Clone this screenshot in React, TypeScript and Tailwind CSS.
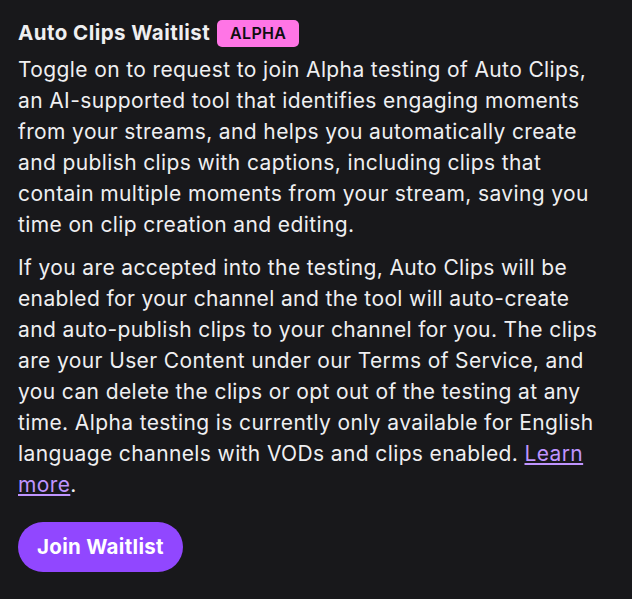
export default function App() {
  return (
    <div
      className="min-h-[599px] w-[632px] bg-[#18181b] px-[18px] pt-[18px] text-[#efeff1]"
      style={{ fontFamily: "Inter, 'Noto Sans', sans-serif" }}
    >
      <div className="flex items-center gap-[7px]">
        <h2 className="text-[20.5px] font-bold leading-[30px] tracking-[0.45px]">Auto Clips Waitlist</h2>
        <span className="rounded-[5px] bg-[#ff75e6] px-[13px] py-[2px] text-[16px] font-semibold leading-[23px] tracking-[0.3px] text-[#0e0e10]">
          ALPHA
        </span>
      </div>
      <div className="w-[586px] text-[21px] leading-[31px] tracking-[0.38px]">
        <p className="mt-[6px]">
          Toggle on to request to join Alpha testing of Auto Clips, an AI-supported tool that
          identifies engaging moments from your streams, and helps you automatically create and
          publish clips with captions, including clips that contain multiple moments from your
          stream, saving you time on clip creation and editing.
        </p>
        <p className="mt-[12px]">
          If you are accepted into the testing, Auto Clips will be enabled for your channel and the
          tool will auto-create and auto-publish clips to your channel for you. The clips are your
          User Content under our Terms of Service, and you can delete the clips or opt out of the
          testing at any time. Alpha testing is currently only available for English language
          channels with VODs and clips enabled.{" "}
          <a href="#" className="text-[#bf94ff] underline">
            Learn more
          </a>
          .
        </p>
      </div>
      <button className="mt-[22px] h-[50px] rounded-full bg-[#9147ff] px-[19px] text-[20.5px] font-bold tracking-[0.3px] text-white">
        Join Waitlist
      </button>
    </div>
  );
}
